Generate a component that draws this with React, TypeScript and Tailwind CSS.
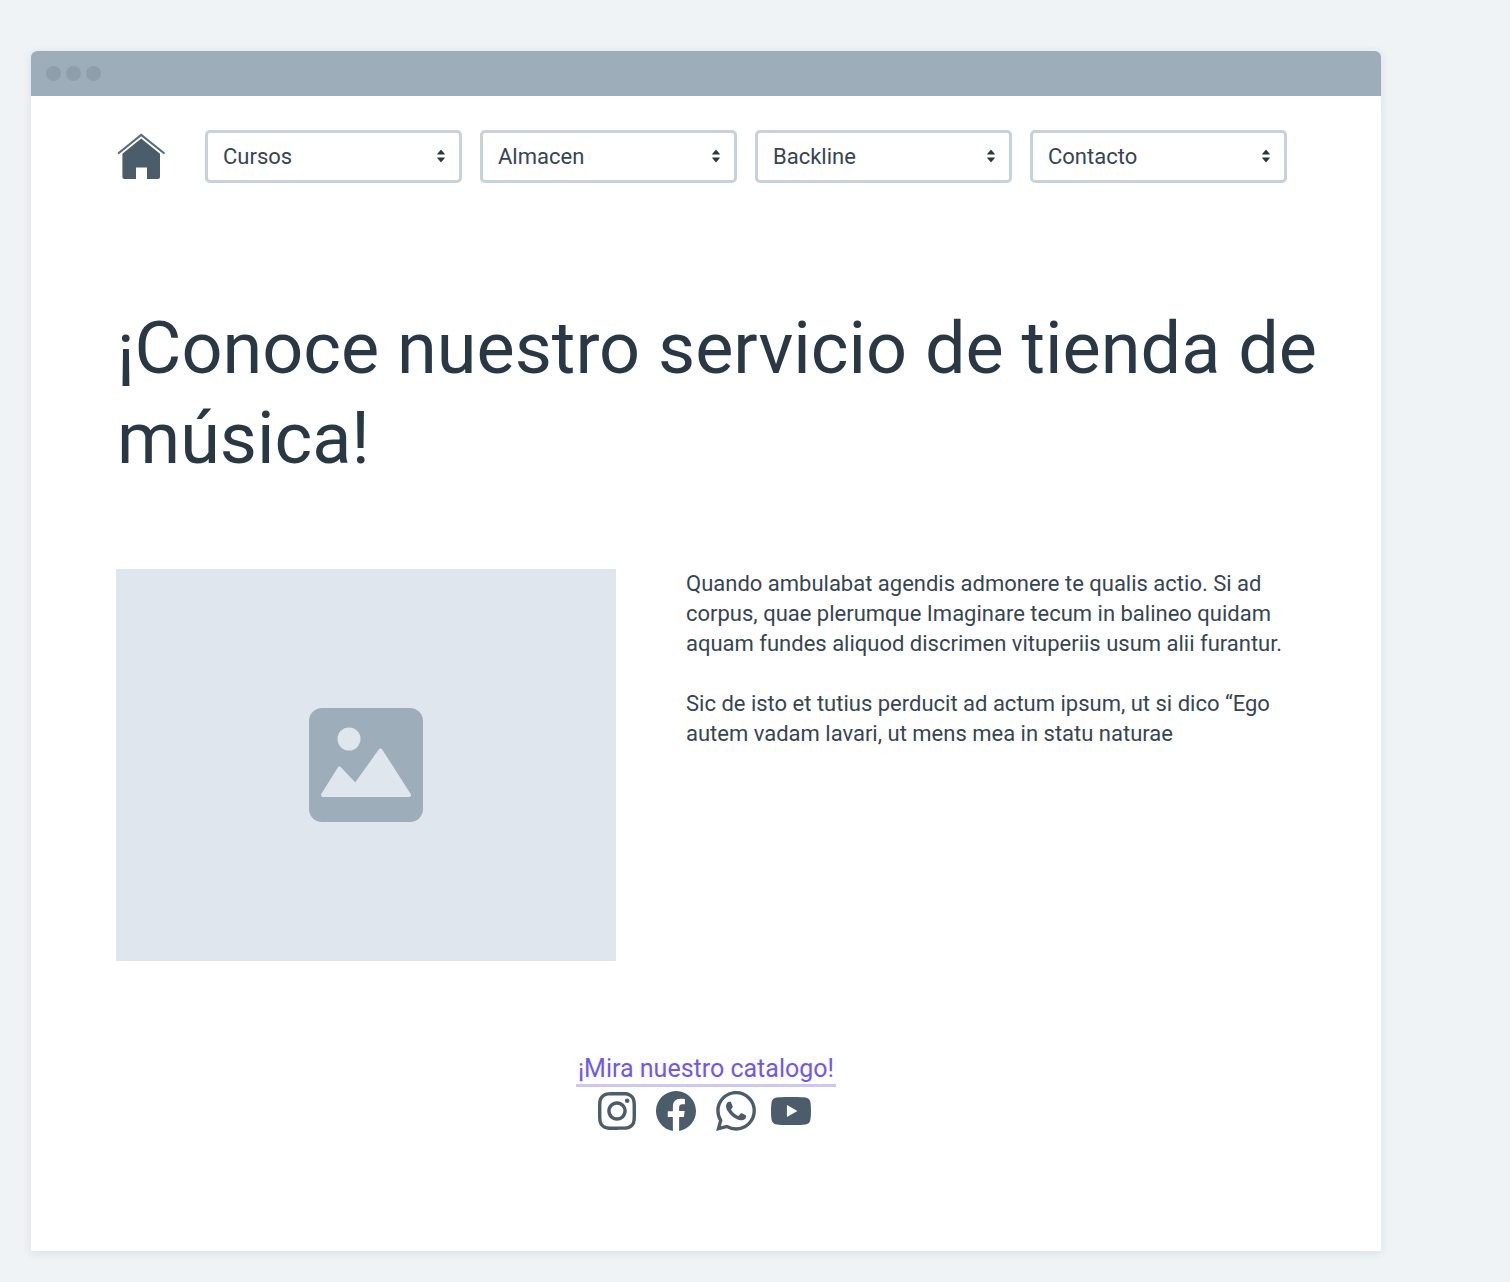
import { BsFacebook } from "react-icons/bs";
import { SiInstagram, SiWhatsapp, SiYoutube } from "react-icons/si";

const menus = ["Cursos", "Almacen", "Backline", "Contacto"];

function HouseIcon() {
  return (
    <svg viewBox="0 0 50 48" className="h-12 w-[50px]" fill="#4b5d6b" aria-hidden="true">
      <path d="M2.800 20 25.200 1.800 47.800 20" fill="none" stroke="#5b6d7b" strokeWidth="2.2" strokeLinecap="round" />
      <path d="M25.200 5.500 44 20.800V44a2 2 0 0 1-2 2H31V34.500H20V46H8.400a2 2 0 0 1-2-2V20.800Z" />
    </svg>
  );
}

function SortIcon() {
  return (
    <svg
      viewBox="0 0 10 14"
      className="pointer-events-none absolute top-[19px] right-4 h-3.5 w-2.5"
      fill="#293845"
      aria-hidden="true"
    >
      <path d="M1.200 5 4.600 1Q5 .600 5.400 1L8.800 5Q9.200 5.600 8.400 5.600H1.600Q.800 5.600 1.200 5Z" />
      <path d="M1.200 9 4.600 13Q5 13.400 5.400 13L8.800 9Q9.200 8.400 8.400 8.400H1.600Q.800 8.400 1.200 9Z" />
    </svg>
  );
}

function MenuSelect({ name }: { name: string }) {
  return (
    <div className="relative min-w-0 flex-1">
      <select
        aria-label={name}
        className="h-[53px] w-full appearance-none rounded-[5px] border-3 border-[#c8d2db] bg-white pr-9 pl-[15px] text-[22px] text-[#364552]"
      >
        <option>{name}</option>
      </select>
      <SortIcon />
    </div>
  );
}

function Placeholder() {
  return (
    <div className="flex h-98 w-[500px] shrink-0 items-center justify-center bg-[#dfe6ee]">
      <svg viewBox="0 0 114 114" className="size-[114px]" role="img" aria-label="Imagen">
        <rect width="114" height="114" rx="13" fill="#9eadba" />
        <circle cx="40" cy="31" r="11.500" fill="#dfe6ee" />
        <path
          d="M14 87 30.500 60.500 46.500 77.500 71.500 42.500 100 87Z"
          fill="#dfe6ee"
          stroke="#dfe6ee"
          strokeWidth="4"
          strokeLinejoin="round"
        />
      </svg>
    </div>
  );
}

export default function App() {
  return (
    <div className="min-h-screen bg-[#eff3f6] pt-[51px] pr-[129px] pb-[31px] pl-[31px] font-['Roboto',sans-serif] text-[#293845]">
      <div className="rounded-t-md bg-white pb-[120px] shadow-[0_2px_10px_rgba(60,80,100,0.12)]">
        <div className="flex h-[45px] items-center gap-[5px] rounded-t-md bg-[#9eadba] pl-[15px]">
          <span className="size-[15px] rounded-full bg-[#8e9eac]" />
          <span className="size-[15px] rounded-full bg-[#8e9eac]" />
          <span className="size-[15px] rounded-full bg-[#8e9eac]" />
        </div>

        <nav className="flex items-center gap-[39px] pt-[34px] pr-[94px] pl-[85px]">
          <a href="#" aria-label="Inicio">
            <HouseIcon />
          </a>
          <div className="flex min-w-0 flex-1 gap-[18px]">
            {menus.map((name) => (
              <MenuSelect key={name} name={name} />
            ))}
          </div>
        </nav>

        <h1 className="mt-[121px] pr-6 pl-[86px] text-[72px] leading-[90px]">
          ¡Conoce nuestro servicio de tienda de música!
        </h1>

        <div className="mt-[85px] flex gap-[70px] pr-[85px] pl-[85px]">
          <Placeholder />
          <div className="flex min-w-0 flex-col gap-[30px] text-[22px] leading-[30px] text-[#364552]">
            <p>
              Quando ambulabat agendis admonere te qualis actio. Si ad
              <br />
              corpus, quae plerumque Imaginare tecum in balineo quidam
              <br />
              aquam fundes aliquod discrimen vituperiis usum alii furantur.
            </p>
            <p>
              Sic de isto et tutius perducit ad actum ipsum, ut si dico “Ego
              <br />
              autem vadam lavari, ut mens mea in statu naturae
            </p>
          </div>
        </div>

        <div className="mt-[93px] flex flex-col items-center">
          <a href="#" className="border-b-3 border-[#cdc5fd] px-0.5 text-[25px] leading-[30px] text-[#6e56f8]">
            ¡Mira nuestro catalogo!
          </a>
          <div className="mt-1 flex items-center gap-5 pr-1 text-[#4b5d6b]">
            <a href="#" aria-label="Instagram">
              <SiInstagram size={38} />
            </a>
            <a href="#" aria-label="Facebook">
              <BsFacebook size={40} />
            </a>
            <div className="flex gap-[15px]">
              <a href="#" aria-label="WhatsApp">
                <SiWhatsapp size={40} />
              </a>
              <a href="#" aria-label="YouTube">
                <SiYoutube size={40} />
              </a>
            </div>
          </div>
        </div>
      </div>
    </div>
  );
}
